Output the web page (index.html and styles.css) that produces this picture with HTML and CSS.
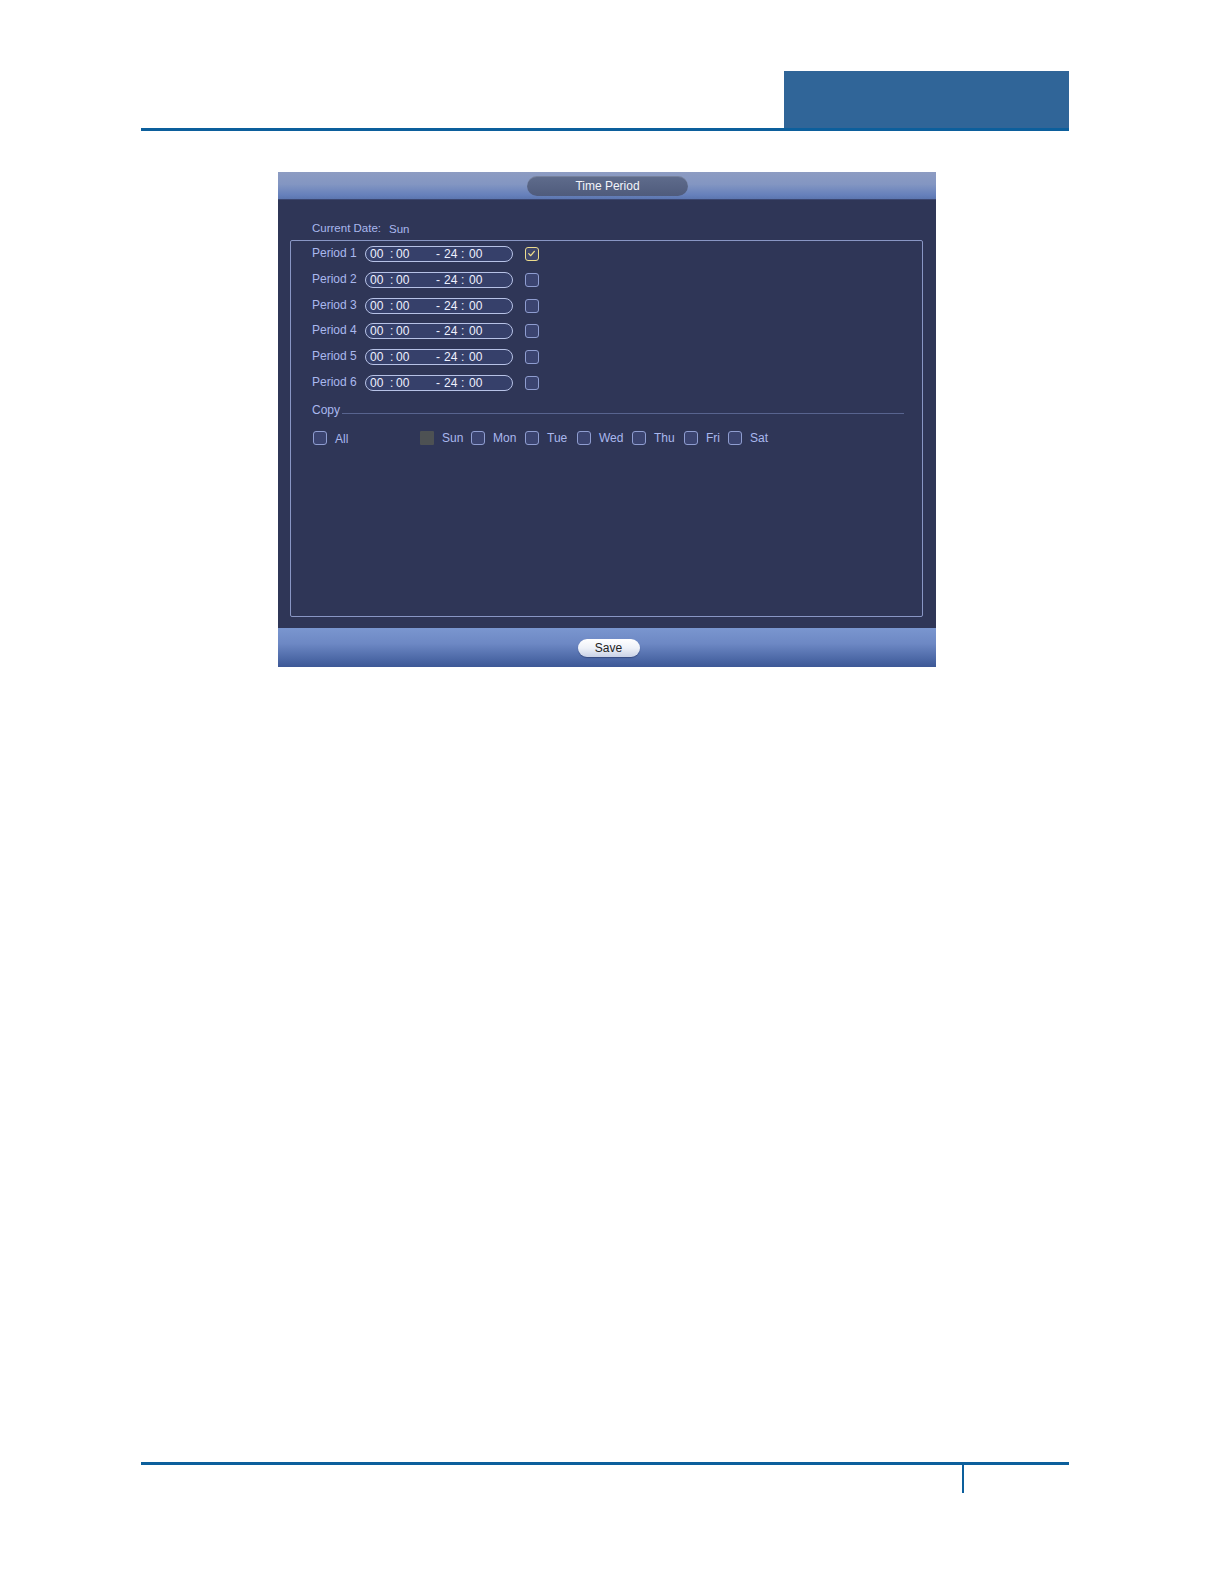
FILE: index.html
```html
<!DOCTYPE html>
<html>
<head>
<meta charset="utf-8">
<link rel="stylesheet" href="styles.css">
</head>
<body>
<div class="page">
  <header class="doc-header">
    <div class="tab"></div>
    <div class="rule"></div>
  </header>

  <div class="dialog">
    <div class="titlebar"><div class="title-pill">Time Period</div></div>
    <div class="dlg-body">
      <div class="cur-date"><span class="lbl">Current Date:</span><span class="val">Sun</span></div>
      <div class="frame">
        <div class="periods">
          <div class="prow"><span class="plabel">Period 1</span><div class="tfield"><span class="t1">00</span><span class="t2">:</span><span class="t3">00</span><span class="t4">-</span><span class="t5">24</span><span class="t6">:</span><span class="t7">00</span></div><span class="cb checked"><svg viewBox="0 0 14 14"><path d="M3.5 7.2 L6 9.8 L10.6 4.2" fill="none" stroke="#f0de8a" stroke-width="1.6" stroke-linecap="round" stroke-linejoin="round"/></svg></span></div>
          <div class="prow"><span class="plabel">Period 2</span><div class="tfield"><span class="t1">00</span><span class="t2">:</span><span class="t3">00</span><span class="t4">-</span><span class="t5">24</span><span class="t6">:</span><span class="t7">00</span></div><span class="cb"></span></div>
          <div class="prow"><span class="plabel">Period 3</span><div class="tfield"><span class="t1">00</span><span class="t2">:</span><span class="t3">00</span><span class="t4">-</span><span class="t5">24</span><span class="t6">:</span><span class="t7">00</span></div><span class="cb"></span></div>
          <div class="prow"><span class="plabel">Period 4</span><div class="tfield"><span class="t1">00</span><span class="t2">:</span><span class="t3">00</span><span class="t4">-</span><span class="t5">24</span><span class="t6">:</span><span class="t7">00</span></div><span class="cb"></span></div>
          <div class="prow"><span class="plabel">Period 5</span><div class="tfield"><span class="t1">00</span><span class="t2">:</span><span class="t3">00</span><span class="t4">-</span><span class="t5">24</span><span class="t6">:</span><span class="t7">00</span></div><span class="cb"></span></div>
          <div class="prow"><span class="plabel">Period 6</span><div class="tfield"><span class="t1">00</span><span class="t2">:</span><span class="t3">00</span><span class="t4">-</span><span class="t5">24</span><span class="t6">:</span><span class="t7">00</span></div><span class="cb"></span></div>
        </div>
        <div class="copy-head"><span class="copy-lbl">Copy</span><span class="copy-line"></span></div>
        <div class="copy-row">
          <div class="opt all"><span class="cb"></span><span class="olbl">All</span></div>
          <div class="days">
            <div class="opt"><span class="cb disabled"></span><span class="olbl">Sun</span></div>
            <div class="opt"><span class="cb"></span><span class="olbl">Mon</span></div>
            <div class="opt"><span class="cb"></span><span class="olbl">Tue</span></div>
            <div class="opt"><span class="cb"></span><span class="olbl">Wed</span></div>
            <div class="opt"><span class="cb"></span><span class="olbl">Thu</span></div>
            <div class="opt"><span class="cb"></span><span class="olbl">Fri</span></div>
            <div class="opt"><span class="cb"></span><span class="olbl">Sat</span></div>
          </div>
        </div>
      </div>
    </div>
    <div class="bottombar"><div class="save-btn">Save</div></div>
  </div>

  <footer class="doc-footer">
    <div class="rule"></div>
    <div class="tick"></div>
  </footer>
</div>
</body>
</html>
```

FILE: styles.css
```css
html, body {
  margin: 0;
  padding: 0;
  background: #ffffff;
  width: 1224px;
  height: 1584px;
  overflow: hidden;
}
.page {
  width: 1224px;
  height: 1584px;
  position: relative;
  overflow: hidden;
  font-family: "Liberation Sans", Arial, sans-serif;
}

/* header */
.doc-header {
  padding-top: 71px;
  margin-left: 141px;
  width: 928px;
  display: flex;
  flex-direction: column;
  align-items: flex-end;
}
.doc-header .tab {
  width: 285px;
  height: 57px;
  background: #306598;
}
.doc-header .rule {
  width: 928px;
  height: 3px;
  background: #0c5f9c;
}

/* dialog */
.dialog {
  margin-top: 41px;
  margin-left: 278px;
  width: 658px;
  height: 495px;
  display: flex;
  flex-direction: column;
  background: #2f3657;
}
.titlebar {
  height: 28px;
  background: linear-gradient(to bottom, #8d9cc2 0%, #8396c2 45%, #6680bb 85%, #5c76b0 100%);
  border-bottom: 1px solid #3b4670;
  box-sizing: border-box;
  display: flex;
  justify-content: center;
  padding-top: 4px;
  padding-left: 1px;
}
.title-pill {
  width: 161px;
  height: 20px;
  border-radius: 10px;
  background: linear-gradient(to bottom, #5f6c8c 0%, #4f5b7c 100%);
  box-shadow: inset 0 1px 0 rgba(255,255,255,0.15);
  color: #f2f4fa;
  font-size: 12px;
  line-height: 20px;
  text-align: center;
}
.dlg-body {
  height: 428px;
  box-sizing: border-box;
  padding: 21px 13px 11px 12px;
  display: flex;
  flex-direction: column;
}
.cur-date {
  height: 14px;
  line-height: 14px;
  font-size: 11.5px;
  padding-left: 22px;
  color: #aab8ee;
}
.cur-date .val {
  margin-left: 8px;
  position: relative;
  top: 1px;
}
.frame {
  margin-top: 5px;
  flex: 1;
  border: 1px solid #8996c4;
  border-radius: 2px;
  box-sizing: border-box;
  padding: 5px 0 0 21px;
  display: flex;
  flex-direction: column;
}
.periods {
  display: flex;
  flex-direction: column;
  gap: 9.8px;
}
.prow {
  height: 16px;
  display: flex;
  align-items: center;
}
.plabel {
  width: 53px;
  color: #aab8ee;
  font-size: 12px;
  position: relative;
  top: -1px;
}
.tfield {
  width: 148px;
  height: 16px;
  box-sizing: border-box;
  border: 1px solid #b7c2e6;
  border-radius: 8px;
  background: #36406a;
  position: relative;
  color: #eef1ff;
  font-size: 12px;
  line-height: 14px;
}
.tfield span {
  position: absolute;
  top: 0;
}
.tfield .t1 { left: 4px; }
.tfield .t2 { left: 24px; }
.tfield .t3 { left: 30px; }
.tfield .t4 { left: 70px; }
.tfield .t5 { left: 78px; }
.tfield .t6 { left: 95px; }
.tfield .t7 { left: 103px; }

.cb {
  display: inline-block;
  width: 14px;
  height: 14px;
  box-sizing: border-box;
  border: 1.5px solid #8f9dd0;
  border-radius: 3px;
  background: #3b4470;
  flex: none;
}
.prow .cb { margin-left: 12px; }
.cb.checked {
  border-color: #eddc8c;
  background: #3f466a;
}
.cb svg {
  display: block;
  width: 11px;
  height: 11px;
}
.cb.disabled {
  border: none;
  background: #4d5153;
  border-radius: 1px;
}

.copy-head {
  margin-top: 12px;
  display: flex;
  align-items: flex-end;
  height: 14px;
}
.copy-lbl {
  color: #aab8ee;
  font-size: 12px;
  line-height: 14px;
}
.copy-line {
  flex: none;
  width: 562px;
  height: 1px;
  background: #58648f;
  margin-left: 2px;
  margin-bottom: 3px;
}
.copy-row {
  margin-top: 13px;
  display: flex;
  align-items: center;
  height: 16px;
}
.opt {
  display: flex;
  align-items: center;
}
.olbl {
  color: #aab8ee;
  font-size: 12px;
  margin-left: 8px;
}
.opt.all { width: 107px; padding-left: 1px; }
.opt.all .olbl { margin-top: 3px; }
.days {
  display: flex;
  align-items: center;
}
.days .opt:nth-child(1) { width: 51px; }
.days .opt:nth-child(2) { width: 54px; }
.days .opt:nth-child(3) { width: 52px; }
.days .opt:nth-child(4) { width: 55px; }
.days .opt:nth-child(5) { width: 52px; }
.days .opt:nth-child(6) { width: 44px; }

.bottombar {
  height: 39px;
  background: linear-gradient(to bottom, #7a96cf 0%, #6d88c4 40%, #4c68a6 80%, #3d5896 100%);
  display: flex;
  justify-content: center;
  align-items: center;
  padding-left: 3px;
}
.save-btn {
  width: 62px;
  height: 18px;
  border-radius: 9px;
  background: linear-gradient(to bottom, #ffffff 0%, #eef1f8 50%, #c9d2e6 100%);
  box-shadow: 0 1px 1px rgba(20,30,70,0.4);
  color: #222;
  font-size: 12px;
  line-height: 18px;
  text-align: center;
}

/* footer */
.doc-footer {
  position: absolute;
  top: 1462px;
  left: 141px;
  width: 928px;
}
.doc-footer .rule {
  height: 3px;
  background: #0c5f9c;
}
.doc-footer .tick {
  margin-left: 821px;
  width: 2px;
  height: 28px;
  background: #0c5f9c;
}
```
